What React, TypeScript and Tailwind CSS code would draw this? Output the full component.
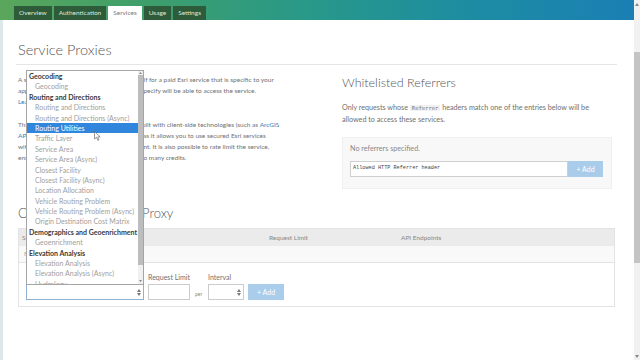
import React from "react";

const groups: { g: string; items: string[] }[] = [
  { g: "Geocoding", items: ["Geocoding"] },
  {
    g: "Routing and Directions",
    items: [
      "Routing and Directions",
      "Routing and Directions (Async)",
      "Routing Utilities",
      "Traffic Layer",
      "Service Area",
      "Service Area (Async)",
      "Closest Facility",
      "Closest Facility (Async)",
      "Location Allocation",
      "Vehicle Routing Problem",
      "Vehicle Routing Problem (Async)",
      "Origin Destination Cost Matrix",
    ],
  },
  { g: "Demographics and Geoenrichment", items: ["Geoenrichment"] },
  { g: "Elevation Analysis", items: ["Elevation Analysis", "Elevation Analysis (Async)", "Hydrology"] },
];

function UpDown() {
  return (
    <svg width="4" height="7" viewBox="0 0 4 7" className="shrink-0">
      <path d="M0 3 L2 0 L4 3 Z" fill="#777" />
      <path d="M0 4 L2 7 L4 4 Z" fill="#777" />
    </svg>
  );
}

function Dropdown() {
  return (
    <div className="absolute bottom-full left-[-1px] z-10 flex h-[215px] w-[118px] border border-[#a5a5a5] bg-white">
      <div className="flex-1 overflow-hidden">
        {groups.map((grp) => (
          <div key={grp.g}>
            <div className="h-[10.4px] whitespace-nowrap pl-[2px] text-[7px] font-bold leading-[10.4px] text-[#3a3a3a]">
              {grp.g}
            </div>
            {grp.items.map((it) =>
              it === "Routing Utilities" ? (
                <div
                  key={it}
                  className="h-[10.4px] whitespace-nowrap bg-[#2f86dc] pl-[8px] text-[7px] leading-[10.4px] text-white"
                >
                  {it}
                </div>
              ) : (
                <div
                  key={grp.g + it}
                  className="h-[10.4px] whitespace-nowrap pl-[8px] text-[7px] leading-[10.4px] text-[#a0a0a0]"
                >
                  {it}
                </div>
              )
            )}
          </div>
        ))}
      </div>
      <div className="flex w-[5px] flex-col bg-[#f0f0f0]">
        <div className="flex h-[4px] items-center justify-center">
          <svg width="3" height="2" viewBox="0 0 3 2">
            <path d="M0 2 L1.5 0 L3 2 Z" fill="#888" />
          </svg>
        </div>
        <div className="h-[190px] bg-[#bdbdbd]" />
        <div className="flex-1" />
        <div className="flex h-[6px] items-center justify-center">
          <svg width="3" height="2" viewBox="0 0 3 2">
            <path d="M0 0 L1.5 2 L3 0 Z" fill="#888" />
          </svg>
        </div>
      </div>
      <svg
        className="absolute left-[67px] top-[60px]"
        width="7"
        height="10"
        viewBox="0 0 7 10"
      >
        <path d="M0.5 0.5 L0.5 8 L2.4 6.3 L3.8 9.3 L5 8.8 L3.7 5.9 L6.2 5.9 Z" fill="white" stroke="#555" strokeWidth="0.6" />
      </svg>
    </div>
  );
}

export default function App() {
  const tabs = ["Overview", "Authentication", "Services", "Usage", "Settings"];
  return (
    <div className="flex h-[360px] w-[640px] overflow-hidden bg-white font-['Lato',sans-serif] text-[#707070]">
      <div className="flex min-w-0 flex-1 flex-col">
        <header className="flex h-[20px] shrink-0 items-end gap-[2px] bg-[linear-gradient(90deg,#5aa65b_0%,#3f9f6a_22%,#27988a_50%,#1d8ca3_75%,#1a7fb4_100%)] pl-[14px]">
          {tabs.map((t) =>
            t === "Services" ? (
              <div key={t} className="flex h-[14px] items-center bg-white px-[5px] text-[6.5px] text-[#7a7a7a]">
                {t}
              </div>
            ) : (
              <div key={t} className="flex h-[14px] items-center bg-[#2e5c3a] px-[5px] text-[6.5px] text-[#dbe8dc]">
                {t}
              </div>
            )
          )}
        </header>
        <div className="flex-1 border-l-[3px] border-[#dde8ec] pl-[13px] pr-[17px]">
          <div className="border-b border-[#e6e6e6] pb-[6px] pl-[2px] pt-[21px] text-[14.5px] font-light leading-[17px] text-[#555]">
            Service Proxies
          </div>
          <div className="flex items-start pl-[2px]">
            <div className="mr-[14px] w-[310px] pt-[9px] text-[6.5px] leading-[11px]">
              <div className="whitespace-nowrap">A service proxy can be created on your behalf for a paid Esri service that is specific to your</div>
              <div className="whitespace-nowrap">application, and only the referrers that you specify will be able to access the service.</div>
              <div className="whitespace-nowrap text-[#2a7fc1]">Learn more about service proxies</div>
              <div className="mt-[12px] whitespace-nowrap">
                This is useful when creating an app that is built with client-side technologies (such as{" "}
                <span className="text-[#2a7fc1]">ArcGIS</span>
              </div>
              <div className="whitespace-nowrap">
                <span className="text-[#2a7fc1]">API for JavaScript or ArcGIS Runtime SDKs</span>) as it allows you to use secured Esri services
              </div>
              <div className="whitespace-nowrap">without exposing your credentials in the client. It is also possible to rate limit the service,</div>
              <div className="whitespace-nowrap">ensuring that your app does not consume too many credits.</div>
            </div>
            <div className="w-[270px] pt-[10px]">
              <div className="text-[12.5px] font-light leading-[15px] text-[#555]">Whitelisted Referrers</div>
              <div className="mt-[12px] whitespace-nowrap text-[7.2px] leading-[11px]">
                Only requests whose{" "}
                <span className="bg-[#f1f1f1] px-[2px] font-['DejaVu_Sans_Mono',monospace] text-[5.5px] text-[#777]">Referrer</span>{" "}
                headers match one of the entries below will be
                <br />
                allowed to access these services.
              </div>
              <div className="mt-[12px] border border-[#efefef] bg-[#f8f8f8] pb-[11px] pl-[7px] pr-[8px] pt-[6px]">
                <div className="text-[7.2px] leading-[10px] text-[#888]">No referrers specified.</div>
                <div className="mt-[7px] flex h-[16px]">
                  <div className="flex flex-1 items-center border border-[#cfcfcf] bg-white pl-[2px] font-['Liberation_Mono',monospace] text-[5.2px] text-[#444]">
                    Allowed HTTP Referrer header
                  </div>
                  <div className="flex w-[35px] items-center justify-center bg-[#a9cceb] text-[7px] text-white">+ Add</div>
                </div>
              </div>
            </div>
          </div>
          <div className="mt-[16px] pl-[2px] text-[13px] font-light leading-[16px] text-[#555]">Create a New Service Proxy</div>
          <div className="ml-[2px] mr-[2px] mt-[7px] border border-[#e3e3e3]">
            <div className="grid h-[17px] grid-cols-[250px_132px_1fr] items-center bg-[#ebebeb] text-[6.5px] text-[#888]">
              <div className="pl-[3px]">Service</div>
              <div>Request Limit</div>
              <div>API Endpoints</div>
            </div>
            <div className="flex h-[17px] items-center border-b border-[#e3e3e3] bg-[#f9f9f9] pl-[5px] text-[6.5px] text-[#999]">
              No service proxies have been created.
            </div>
            <div className="flex items-end pb-[6px] pl-[7px] pt-[10px] text-[7px]">
              <div className="flex flex-col">
                <div className="h-[8px] leading-[8px]">Service</div>
                <div className="relative mt-[3px] flex h-[16px] w-[118px] items-center justify-end border border-[#8fb0d4] bg-white pr-[2px]">
                  <UpDown />
                  <Dropdown />
                </div>
              </div>
              <div className="ml-[4px] flex flex-col">
                <div className="h-[8px] leading-[8px]">Request Limit</div>
                <div className="mt-[3px] h-[16px] w-[42px] border border-[#cccccc] bg-white" />
              </div>
              <div className="mb-[2px] ml-[5px] w-[13px] text-[5px] text-[#888]">per</div>
              <div className="flex flex-col">
                <div className="h-[8px] leading-[8px]">Interval</div>
                <div className="mt-[3px] flex h-[16px] w-[36px] items-center justify-end border border-[#cccccc] bg-white pr-[2px]">
                  <UpDown />
                </div>
              </div>
              <div className="ml-[4px] flex h-[16px] w-[36px] items-center justify-center bg-[#a9cdeb] text-white">+ Add</div>
            </div>
          </div>
        </div>
      </div>
      <div className="flex w-[6px] flex-col bg-[#f1f1f1]">
        <div className="flex h-[8px] items-center justify-center">
          <svg width="4" height="3" viewBox="0 0 4 3">
            <path d="M0 3 L2 0 L4 3 Z" fill="#888" />
          </svg>
        </div>
        <div className="h-[44px]" />
        <div className="h-[211px] bg-[#c4c4c4]" />
        <div className="flex-1" />
        <div className="flex h-[8px] items-center justify-center">
          <svg width="4" height="3" viewBox="0 0 4 3">
            <path d="M0 0 L2 3 L4 0 Z" fill="#888" />
          </svg>
        </div>
      </div>
    </div>
  );
}
